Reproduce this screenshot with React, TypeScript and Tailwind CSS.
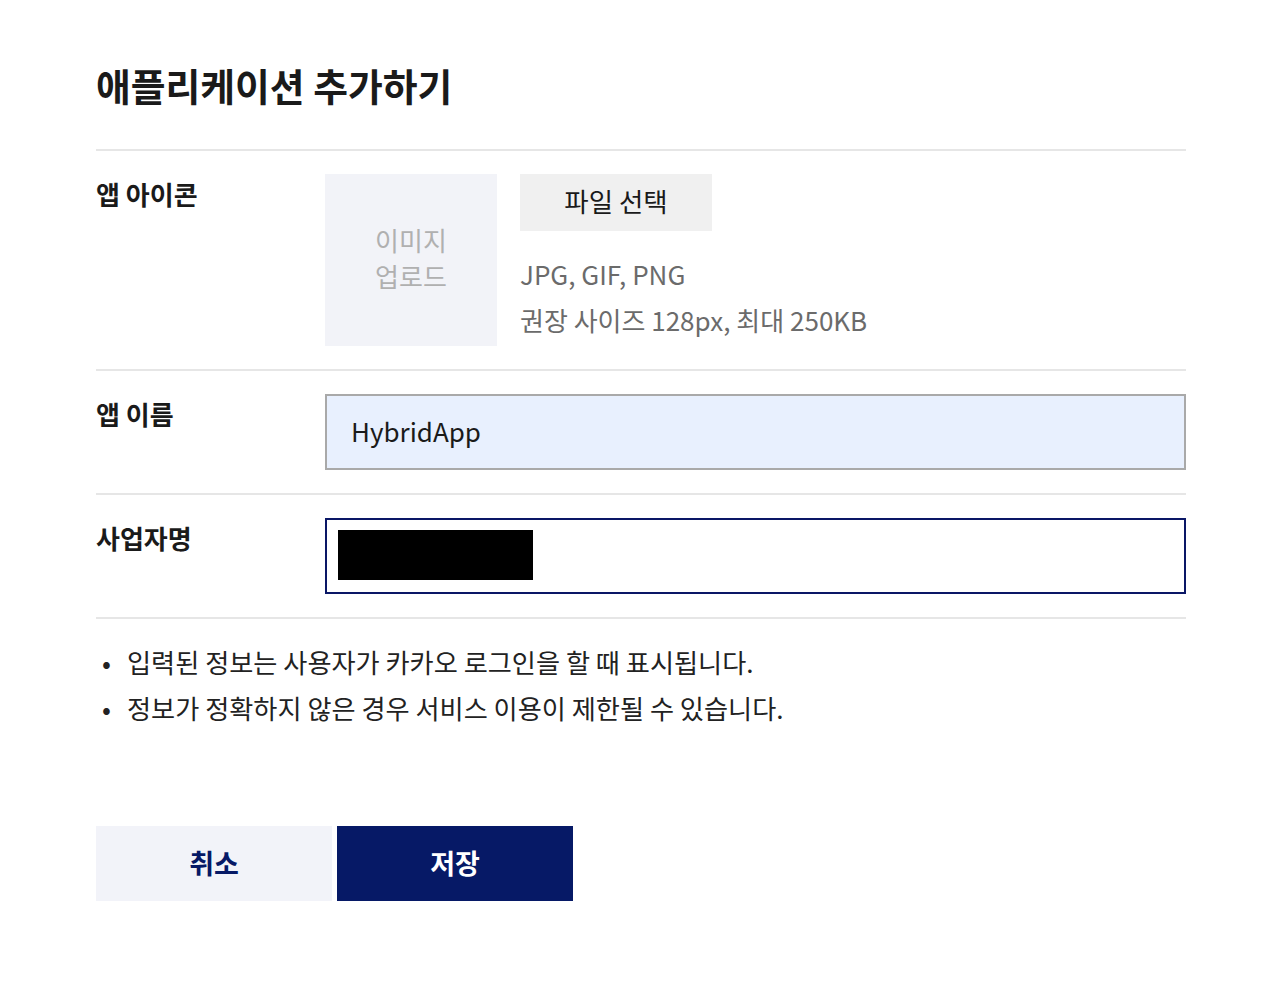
export default function App() {
  const font = { fontFamily: '"Noto Sans CJK KR", "Noto Sans", sans-serif' }
  return (
    <div className="min-h-[994px] bg-white pt-[58px] pr-[94px] pl-24 text-[#1a1a1a]" style={font}>
      <h1 className="text-[37.8px] leading-[54px] font-bold">애플리케이션 추가하기</h1>

      <div className="mt-[37px] border-t-2 border-[#e6e6e6]">
        {/* 앱 아이콘 */}
        <div className="flex border-b-2 border-[#e6e6e6] py-[23px]">
          <div className="w-[229px] text-[26px] leading-[40px] font-bold">앱 아이콘</div>
          <div className="flex gap-[23px]">
            <div className="flex h-[172px] w-[172px] flex-col items-center justify-center bg-[#f2f3f8] pb-[4px] text-center text-[26px] leading-[36px] text-[#b0b0b0]">
              <span>이미지</span>
              <span>업로드</span>
            </div>
            <div>
              <button className="h-[57px] w-[192px] bg-[#f0f0f0] pb-[4px] text-[26.5px] text-[#1a1a1a]">파일 선택</button>
              <div className="mt-5 text-[26px] leading-[46px] text-[#6b6b6b]">
                <p>JPG, GIF, PNG</p>
                <p>권장 사이즈 128px, 최대 250KB</p>
              </div>
            </div>
          </div>
        </div>

        {/* 앱 이름 */}
        <div className="flex border-b-2 border-[#e6e6e6] py-[23px]">
          <div className="w-[229px] text-[26px] leading-[40px] font-bold">앱 이름</div>
          <div className="flex h-[76px] flex-1 items-center border-2 border-[#a9a9a9] bg-[#e8f0fe] px-6 pb-[3px] text-[26px] text-[#1a1a1a]">
            HybridApp
          </div>
        </div>

        {/* 사업자명 */}
        <div className="flex border-b-2 border-[#e6e6e6] py-[23px]">
          <div className="w-[229px] text-[26px] leading-[40px] font-bold">사업자명</div>
          <div className="flex h-[76px] flex-1 items-center border-2 border-[#0a1766] bg-white pb-[2px] pl-[11px]">
            <div className="h-[50px] w-[195px] bg-black" />
          </div>
        </div>
      </div>

      <ul className="mt-5 text-[26.2px] leading-[46px] text-[#222]">
        <li className="flex">
          <span className="w-[31px] pl-[6px]">•</span>
          입력된 정보는 사용자가 카카오 로그인을 할 때 표시됩니다.
        </li>
        <li className="flex">
          <span className="w-[31px] pl-[6px]">•</span>
          정보가 정확하지 않은 경우 서비스 이용이 제한될 수 있습니다.
        </li>
      </ul>

      <div className="mt-[95px] flex gap-[5px]">
        <button className="h-[75px] w-[236px] bg-[#f2f3f9] text-[27px] font-bold text-[#061966]">취소</button>
        <button className="h-[75px] w-[236px] bg-[#061966] text-[27px] font-bold text-white">저장</button>
      </div>
    </div>
  )
}
